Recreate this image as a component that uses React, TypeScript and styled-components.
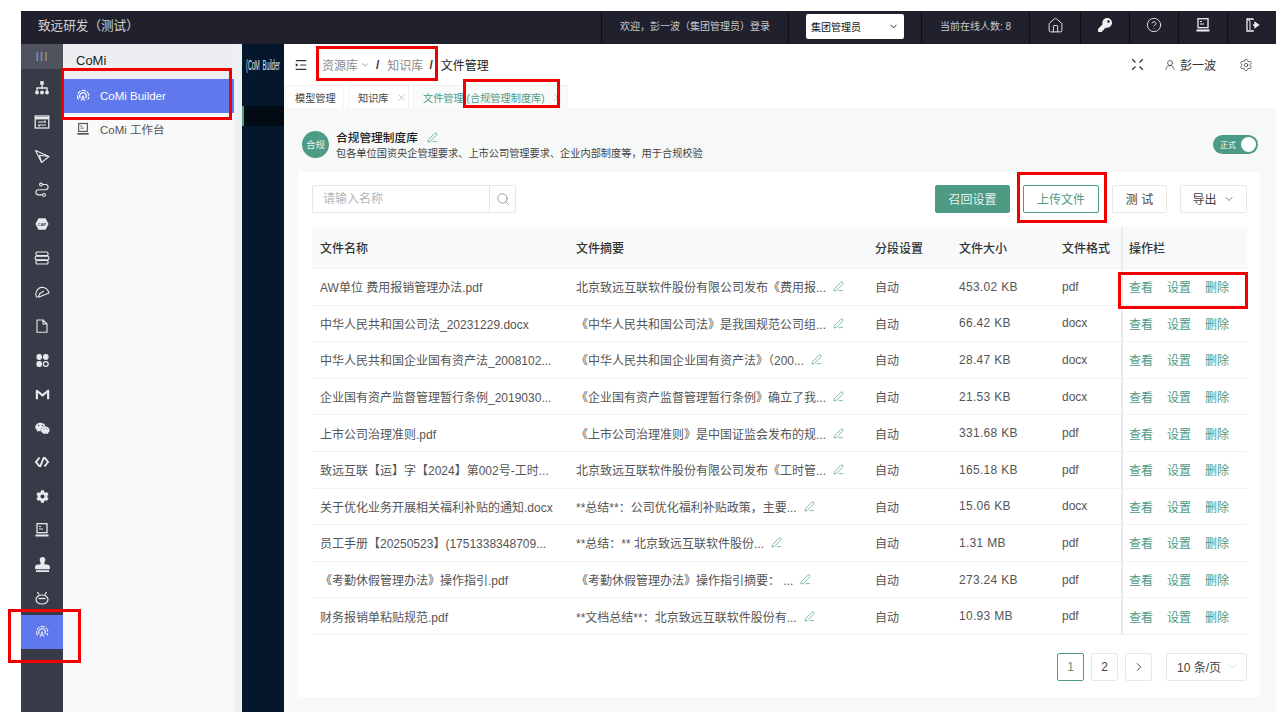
import React from "react";
import styled, { createGlobalStyle } from "styled-components";
import {
  ChevronDown,
  ChevronRight,
  CircleHelp,
  House,
  PenLine,
  Search,
  Settings,
  UserRound,
  X,
} from "lucide-react";
import { FaCog, FaKey, FaStamp, FaWeixin } from "react-icons/fa";

const GREEN = "#4d9a85";

const GlobalStyle = createGlobalStyle`
  html, body {
    margin: 0;
    background: #fff;
    font-family: "Liberation Sans", "Noto Sans CJK SC", sans-serif;
  }
  * { box-sizing: border-box; }
`;

const Page = styled.div`
  position: relative;
  height: 712px;
  padding: 11px 0 0 21px;
  overflow: hidden;
`;

const TopBar = styled.header`
  display: flex;
  height: 33px;
  background: #20212c;
  color: #c9cacd;
  font-size: 10px;
`;

const Brand = styled.div`
  width: 580px;
  padding-left: 17px;
  font-size: 12.6px;
  line-height: 30px;
  color: #d2d3d6;
`;

const BarCell = styled.div<{ $width: number }>`
  display: flex;
  align-items: center;
  justify-content: center;
  width: ${(p) => p.$width}px;
  padding-bottom: 5px;
  border-left: 1px solid #0e0f16;
  color: ${(p) => (p.$width < 60 ? "#f0f0f2" : "inherit")};
`;

const RoleSelect = styled.div`
  display: flex;
  align-items: center;
  justify-content: space-between;
  width: 98px;
  height: 25px;
  margin-top: 2px;
  padding: 0 5px;
  background: #fff;
  border-radius: 2px;
  color: #111;
`;

const Body = styled.div`
  display: flex;
  height: 668px;
`;

const Rail = styled.nav`
  width: 42px;
  background: #383b47;
  color: #e8e9ec;
`;

const RailTop = styled.div`
  display: flex;
  align-items: center;
  justify-content: center;
  height: 25px;
  margin-bottom: 2px;
  background: #50535e;
  color: #9a9ca4;
  font-size: 12px;
  letter-spacing: 1px;
`;

const RailItem = styled.div<{ $active?: boolean }>`
  display: flex;
  align-items: center;
  justify-content: center;
  height: 34px;
  background: ${(p) => (p.$active ? "#5f78ec" : "transparent")};
`;

const SidePanel = styled.aside`
  width: 179px;
  padding-right: 8px;
  background: #eef0f2;
`;

const SideInner = styled.div`
  height: 100%;
  background: #f7f9fb;
`;

const SideTitle = styled.div`
  height: 35px;
  padding: 8px 0 0 13px;
  background: #eceef1;
  color: #222;
  font-size: 13px;
  line-height: 18px;
`;

const SideItem = styled.div<{ $active?: boolean }>`
  display: flex;
  align-items: center;
  gap: 10px;
  height: 33.5px;
  padding-left: 13px;
  background: ${(p) => (p.$active ? "#5f78ec" : "transparent")};
  color: ${(p) => (p.$active ? "#fff" : "#555")};
  font-size: 11.5px;
`;

const DarkNav = styled.div`
  width: 42px;
  background: #04172b;
  color: #e6e8ea;
`;

const NavLogo = styled.div`
  display: flex;
  justify-content: center;
  gap: 5px;
  height: 42px;
  padding-top: 12px;
  font-size: 10px;
  line-height: 18px;
  white-space: nowrap;
  transform: scale(0.56, 1.5);
  transform-origin: 50% 21px;
`;

const NavActive = styled.div`
  height: 20px;
  margin-top: 20px;
  background: #020a14;
  border-left: 2px solid ${GREEN};
`;

const Main = styled.main`
  display: flex;
  flex-direction: column;
  flex: 1;
  min-width: 0;
  background: #f7f8f8;
`;

const CrumbBar = styled.div`
  display: flex;
  align-items: center;
  height: 36px;
  padding: 5px 23px 0 10px;
  background: #fff;
  color: #8b8b8b;
  font-size: 12px;
`;

const MenuGlyph = styled.span`
  display: flex;
  margin-right: 14px;
  color: #333;
`;

const Crumb = styled.span<{ $current?: boolean }>`
  color: ${(p) => (p.$current ? "#222" : "#8b8b8b")};
`;

const CrumbCaret = styled(ChevronDown)`
  margin-left: 2px;
`;

const Slash = styled.span`
  margin: 0 8px 0 6px;
  color: #333;
  font-weight: 700;
`;

const CrumbRight = styled.div`
  display: flex;
  align-items: center;
  margin-left: auto;
  color: #333;
`;

const CrumbUser = styled.span`
  display: flex;
  align-items: center;
  gap: 4px;
  margin: 0 23px 0 20px;
`;

const TabBar = styled.div`
  display: flex;
  gap: 4px;
  height: 28px;
  padding: 5px 0 0 1px;
  background: #fff;
`;

const Tab = styled.div<{ $active?: boolean; $width: number }>`
  display: flex;
  flex: none;
  align-items: center;
  gap: 7px;
  width: ${(p) => p.$width}px;
  padding-left: 9px;
  background: ${(p) => (p.$active ? "#f9fafa" : "#fff")};
  border: 1px solid #f2f2f2;
  border-bottom: 0;
  color: ${(p) => (p.$active ? GREEN : "#444")};
  font-size: 10.2px;
  white-space: nowrap;
`;

const TabClose = styled(X)`
  flex: none;
  color: #999;
`;

const LibraryHead = styled.section`
  display: flex;
  align-items: center;
  gap: 7px;
  height: 64px;
  padding: 8px 18px 0;
`;

const LibraryBadge = styled.div`
  display: flex;
  align-items: center;
  justify-content: center;
  width: 27px;
  height: 27px;
  border-radius: 50%;
  background: ${GREEN};
  color: #e8f2ef;
  font-size: 9.5px;
`;

const LibraryText = styled.div`
  flex: 1;
  padding-top: 2px;
`;

const LibraryTitle = styled.div`
  display: flex;
  align-items: center;
  gap: 9px;
  color: #222;
  font-size: 11.7px;
  font-weight: 500;
  line-height: 16px;
`;

const LibraryDesc = styled.div`
  margin-top: 1px;
  color: #444;
  font-size: 10.2px;
  line-height: 14px;
`;

const Pencil = styled(PenLine)`
  flex: none;
  color: ${GREEN};
`;

const Toggle = styled.div`
  display: flex;
  align-items: center;
  justify-content: space-between;
  width: 45px;
  height: 19px;
  padding: 0 2px 0 7px;
  border-radius: 10px;
  background: ${GREEN};
  color: #fff;
  font-size: 8px;
`;

const ToggleKnob = styled.span`
  width: 15px;
  height: 15px;
  border-radius: 50%;
  background: #fff;
`;

const Card = styled.section`
  width: 962px;
  height: 525px;
  margin-left: 14px;
  padding: 13px 13px 0 14px;
  background: #fff;
`;

const Toolbar = styled.div`
  display: flex;
  align-items: center;
  height: 28px;
  margin-bottom: 14px;
`;

const SearchBox = styled.div`
  display: flex;
  width: 204px;
  height: 28px;
  margin-right: auto;
  border: 1px solid #e6e7e8;
  border-radius: 2px;
  color: #b5b5b5;
  font-size: 12px;
`;

const SearchText = styled.div`
  flex: 1;
  padding-left: 10px;
  line-height: 26px;
`;

const SearchIcon = styled.div`
  display: flex;
  align-items: center;
  justify-content: center;
  width: 26px;
  border-left: 1px solid #e6e7e8;
  color: #777;
`;

const Button = styled.div<{ $variant?: "primary" | "outline"; $width: number }>`
  display: flex;
  align-items: center;
  justify-content: center;
  gap: 6px;
  width: ${(p) => p.$width}px;
  height: 28px;
  margin-left: 13px;
  padding-bottom: 1px;
  border: 1px solid ${(p) => (p.$variant ? GREEN : "#e8e8e8")};
  border-radius: 2px;
  background: ${(p) => (p.$variant === "primary" ? GREEN : "#fff")};
  color: ${(p) =>
    p.$variant === "primary" ? "#e6f1ee" : p.$variant === "outline" ? GREEN : "#444"};
  font-size: 12px;
`;

const Row = styled.div<{ $head?: boolean }>`
  display: grid;
  grid-template-columns: 256px 299px 84px 103px 67px 126px;
  align-items: center;
  height: ${(p) => (p.$head ? "42px" : "36.6px")};
  background: ${(p) => (p.$head ? "#f8f9fa" : "#fff")};
  border-bottom: 1px solid #f2f3f4;
  color: ${(p) => (p.$head ? "#333" : "#555")};
  font-size: 12px;
  font-weight: ${(p) => (p.$head ? 500 : 400)};
`;

const Cell = styled.div`
  padding-left: 8px;
  white-space: nowrap;
`;

const SummaryCell = styled(Cell)`
  display: flex;
  align-items: center;
  gap: 7px;
`;

const SizeCell = styled(Cell)`
  letter-spacing: 0.3px;
`;

const OpsCell = styled(Cell)<{ $head?: boolean }>`
  display: flex;
  align-items: center;
  gap: 14px;
  height: 100%;
  padding-left: 6px;
  border-left: 2px solid #e9eaeb;
  color: ${(p) => (p.$head ? "#333" : GREEN)};
`;

const Pager = styled.div`
  display: flex;
  justify-content: flex-end;
  gap: 7px;
  margin-top: 18px;
`;

const PageBtn = styled.div<{ $active?: boolean }>`
  display: flex;
  align-items: center;
  justify-content: center;
  width: 27px;
  height: 28px;
  border: 1px solid ${(p) => (p.$active ? GREEN : "#e8e8e8")};
  border-radius: 2px;
  color: ${(p) => (p.$active ? GREEN : "#444")};
  font-size: 12px;
`;

const PageSize = styled(PageBtn)`
  justify-content: space-between;
  width: 81px;
  margin-left: 7px;
  padding: 0 7px 0 10px;
  color: #444;
`;

const SizeCaret = styled(ChevronDown)`
  color: #bbb;
`;

// red review marks drawn over the screenshot
const Mark = styled.div<{ $x: number; $y: number; $w: number; $h: number }>`
  position: absolute;
  left: ${(p) => p.$x}px;
  top: ${(p) => p.$y}px;
  width: ${(p) => p.$w}px;
  height: ${(p) => p.$h}px;
  border: 3px solid #f00000;
  pointer-events: none;
`;

const Svg = ({ size = 16, children }: { size?: number; children: React.ReactNode }) => (
  <svg width={size} height={size} viewBox="0 0 16 16" fill="none" stroke="currentColor" strokeWidth="1.3">
    {children}
  </svg>
);

const TerminalIcon = ({ size = 16 }: { size?: number }) => (
  <Svg size={size}>
    <rect x="3" y="1.7" width="10" height="9" />
    <path d="M5 4.5h2M5 7h4" strokeWidth="1" />
    <path d="M1.5 13.5h13" strokeWidth="2" />
  </Svg>
);

const SignalIcon = ({ size = 16 }: { size?: number }) => (
  <Svg size={size}>
    <path d="M3 12A6.5 6.5 0 1 1 13.4 12" strokeDasharray="5 1.2" />
    <path d="M5 10.5A3.8 3.8 0 1 1 11 10.5" />
    <path d="M6 13.5l2-6 2 6M6.8 11.5h2.4" strokeWidth="1.1" />
  </Svg>
);

const railIcons: React.ReactNode[] = [
  <Svg key="org">
    <rect x="6.2" y="1.2" width="3.6" height="3.6" fill="currentColor" stroke="none" />
    <path d="M8 5v4M3 11V8h10v3" />
    <circle cx="3" cy="12.5" r="1.9" fill="currentColor" stroke="none" />
    <circle cx="8" cy="12.5" r="1.9" fill="currentColor" stroke="none" />
    <circle cx="13" cy="12.5" r="1.9" fill="currentColor" stroke="none" />
  </Svg>,
  <Svg key="window">
    <rect x="1.2" y="2" width="13.6" height="12" />
    <path d="M1.2 4.2h13.6" strokeWidth="2.4" />
    <path d="M4 8h8l-2-1.5M12 11H4l2 1.5" strokeWidth="1" />
  </Svg>,
  <Svg key="send">
    <path d="M1.5 2.5L15 8.5 7.5 14.5zM7.5 14.5L5.5 7.2 15 8.5" strokeLinejoin="round" strokeWidth="1.1" />
  </Svg>,
  <Svg key="route">
    <path d="M8.5 2.5h3a2.4 2.4 0 0 1 0 5.2H4.5a2.4 2.4 0 0 0 0 5.2h4" strokeWidth="1.1" />
    <circle cx="7" cy="2.5" r="1.4" strokeWidth="1.1" />
    <circle cx="10" cy="12.9" r="1.4" strokeWidth="1.1" />
  </Svg>,
  <svg key="cap" width="14" height="14" viewBox="0 0 16 16">
    <path d="M4 1.5h8l3.5 6.5-3.5 6.5H4L.5 8z" fill="currentColor" />
    <text x="8" y="9.8" textAnchor="middle" fontSize="4.6" fontWeight="700" fill="#383b47">
      CAP
    </text>
  </svg>,
  <Svg key="stack">
    <rect x="2" y="2" width="12" height="3.6" rx="1" strokeWidth="1.1" />
    <rect x="1.2" y="6.2" width="13.6" height="3.6" rx="1" strokeWidth="1.1" />
    <rect x="2" y="10.4" width="12" height="3.6" rx="1" strokeWidth="1.1" />
  </Svg>,
  <Svg key="gauge">
    <path
      d="M2.5 13A6.8 6.8 0 0 1 8 3.3 8 8 0 0 1 15 9L5 13zM5 12.5A3.8 3.8 0 0 1 8 8.5L9.5 7"
      strokeLinejoin="round"
      strokeWidth="1.1"
    />
  </Svg>,
  <Svg key="file">
    <path d="M3 2h6l4 4v8.2H3zM9 2v4h4" strokeLinejoin="round" strokeWidth="1.1" />
  </Svg>,
  <svg key="clover" width="15" height="15" viewBox="0 0 16 16">
    <rect x="1.5" y="1" width="6" height="6.5" rx="2.6" fill="currentColor" />
    <rect x="8.5" y="1" width="6" height="6.5" rx="2.6" fill="currentColor" />
    <rect x="1.5" y="8.5" width="6" height="6.5" rx="2.6" fill="currentColor" />
    <circle cx="11.5" cy="11.7" r="2.6" fill="none" stroke="currentColor" strokeWidth="1.3" />
  </svg>,
  <Svg key="m" size={15}>
    <path d="M2 13V4l6 5 6-5v9" strokeWidth="2.3" strokeLinejoin="round" />
  </Svg>,
  <FaWeixin key="wechat" size={15} />,
  <Svg key="code">
    <path d="M5.5 3.5L2 8l3.5 4.5M10.5 3.5L14 8l-3.5 4.5M10 3L6 13" strokeWidth="2" />
  </Svg>,
  <FaCog key="cog" size={13} />,
  <TerminalIcon key="terminal" />,
  <FaStamp key="stamp" size={15} />,
  <Svg key="robot">
    <ellipse cx="8" cy="9.5" rx="6" ry="4.5" strokeWidth="1.2" />
    <path d="M4.5 8.5h7" />
    <path d="M5 4.5L3.5 2M11 4.5L12.5 2" />
  </Svg>,
];

type FileRow = { name: string; summary: string; size: string; format: string };

const files: FileRow[] = [
  { name: "AW单位 费用报销管理办法.pdf", summary: "北京致远互联软件股份有限公司发布《费用报...", size: "453.02 KB", format: "pdf" },
  { name: "中华人民共和国公司法_20231229.docx", summary: "《中华人民共和国公司法》是我国规范公司组...", size: "66.42 KB", format: "docx" },
  { name: "中华人民共和国企业国有资产法_2008102...", summary: "《中华人民共和国企业国有资产法》（200...", size: "28.47 KB", format: "docx" },
  { name: "企业国有资产监督管理暂行条例_2019030...", summary: "《企业国有资产监督管理暂行条例》确立了我...", size: "21.53 KB", format: "docx" },
  { name: "上市公司治理准则.pdf", summary: "《上市公司治理准则》是中国证监会发布的规...", size: "331.68 KB", format: "pdf" },
  { name: "致远互联【运】字【2024】第002号-工时...", summary: "北京致远互联软件股份有限公司发布《工时管...", size: "165.18 KB", format: "pdf" },
  { name: "关于优化业务开展相关福利补贴的通知.docx", summary: "**总结**：公司优化福利补贴政策，主要...", size: "15.06 KB", format: "docx" },
  { name: "员工手册【20250523】(1751338348709...", summary: "**总结：** 北京致远互联软件股份...", size: "1.31 MB", format: "pdf" },
  { name: "《考勤休假管理办法》操作指引.pdf", summary: "《考勤休假管理办法》操作指引摘要： ...", size: "273.24 KB", format: "pdf" },
  { name: "财务报销单粘贴规范.pdf", summary: "**文档总结**：北京致远互联软件股份有...", size: "10.93 MB", format: "pdf" },
];

export default function App() {
  return (
    <>
      <GlobalStyle />
      <Page>
        <TopBar>
          <Brand>致远研发（测试）</Brand>
          <BarCell $width={187}>欢迎，彭一波（集团管理员）登录</BarCell>
          <BarCell $width={133}>
            <RoleSelect>
              集团管理员
              <ChevronDown size={11} />
            </RoleSelect>
          </BarCell>
          <BarCell $width={108}>当前在线人数: 8</BarCell>
          <BarCell $width={51}>
            <House size={17} strokeWidth={1.3} />
          </BarCell>
          <BarCell $width={49}>
            <FaKey size={14} />
          </BarCell>
          <BarCell $width={49}>
            <CircleHelp size={16} strokeWidth={1.3} />
          </BarCell>
          <BarCell $width={49}>
            <TerminalIcon />
          </BarCell>
          <BarCell $width={49}>
            <Svg>
              <path d="M9 3V2H3v12h6v-1" />
              <path d="M3 2l3 2v9" strokeWidth="1" />
              <path d="M9 8h3M11 5.5L14.5 8 11 10.5z" fill="currentColor" />
            </Svg>
          </BarCell>
        </TopBar>
        <Body>
          <Rail>
            <RailTop>III</RailTop>
            {railIcons.map((icon, i) => (
              <RailItem key={i}>{icon}</RailItem>
            ))}
            <RailItem $active>
              <SignalIcon size={14} />
            </RailItem>
          </Rail>
          <SidePanel>
            <SideInner>
              <SideTitle>CoMi</SideTitle>
              <SideItem $active>
                <SignalIcon size={14} />
                CoMi Builder
              </SideItem>
              <SideItem>
                <TerminalIcon size={14} />
                CoMi 工作台
              </SideItem>
            </SideInner>
          </SidePanel>
          <DarkNav>
            <NavLogo>
              <span>(CoM</span>
              <span>Builder</span>
            </NavLogo>
            <NavActive />
          </DarkNav>
          <Main>
            <CrumbBar>
              <MenuGlyph>
                <Svg size={14}>
                  <path d="M2 3h12M7 8h7M2 13h12" />
                  <path d="M2 6l3 2-3 2z" fill="currentColor" stroke="none" />
                </Svg>
              </MenuGlyph>
              <Crumb>资源库</Crumb>
              <CrumbCaret size={10} />
              <Slash>/</Slash>
              <Crumb>知识库</Crumb>
              <Slash>/</Slash>
              <Crumb $current>文件管理</Crumb>
              <CrumbRight>
                <Svg size={13}>
                  <path d="M1.5 1.5l4 4M14.5 1.5l-4 4M1.5 14.5l4-4M14.5 14.5l-4-4" strokeWidth="1.6" />
                </Svg>
                <CrumbUser>
                  <UserRound size={12} strokeWidth={1.4} />
                  彭一波
                </CrumbUser>
                <Settings size={14} strokeWidth={1.2} />
              </CrumbRight>
            </CrumbBar>
            <TabBar>
              <Tab $width={59}>模型管理</Tab>
              <Tab $width={61}>
                知识库
                <TabClose size={11} strokeWidth={1.3} />
              </Tab>
              <Tab $active $width={155}>
                文件管理 (合规管理制度库)
                <TabClose size={11} strokeWidth={1.3} />
              </Tab>
            </TabBar>
            <LibraryHead>
              <LibraryBadge>合规</LibraryBadge>
              <LibraryText>
                <LibraryTitle>
                  合规管理制度库
                  <Pencil size={11} strokeWidth={1.5} />
                </LibraryTitle>
                <LibraryDesc>包各单位国资央企管理要求、上市公司管理要求、企业内部制度等，用于合规校验</LibraryDesc>
              </LibraryText>
              <Toggle>
                正式
                <ToggleKnob />
              </Toggle>
            </LibraryHead>
            <Card>
              <Toolbar>
                <SearchBox>
                  <SearchText>请输入名称</SearchText>
                  <SearchIcon>
                    <Search size={14} strokeWidth={1.2} />
                  </SearchIcon>
                </SearchBox>
                <Button $variant="primary" $width={75}>
                  召回设置
                </Button>
                <Button $variant="outline" $width={76}>
                  上传文件
                </Button>
                <Button $width={55}>测 试</Button>
                <Button $width={67}>
                  导出
                  <ChevronDown size={12} strokeWidth={1.4} />
                </Button>
              </Toolbar>
              <Row $head>
                <Cell>文件名称</Cell>
                <Cell>文件摘要</Cell>
                <Cell>分段设置</Cell>
                <Cell>文件大小</Cell>
                <Cell>文件格式</Cell>
                <OpsCell $head>操作栏</OpsCell>
              </Row>
              {files.map((file) => (
                <Row key={file.name}>
                  <Cell>{file.name}</Cell>
                  <SummaryCell>
                    {file.summary}
                    <Pencil size={11} strokeWidth={1.5} />
                  </SummaryCell>
                  <Cell>自动</Cell>
                  <SizeCell>{file.size}</SizeCell>
                  <Cell>{file.format}</Cell>
                  <OpsCell>
                    <span>查看</span>
                    <span>设置</span>
                    <span>删除</span>
                  </OpsCell>
                </Row>
              ))}
              <Pager>
                <PageBtn $active>1</PageBtn>
                <PageBtn>2</PageBtn>
                <PageBtn>
                  <ChevronRight size={14} strokeWidth={1.6} />
                </PageBtn>
                <PageSize>
                  10 条/页
                  <SizeCaret size={13} strokeWidth={1} />
                </PageSize>
              </Pager>
            </Card>
          </Main>
        </Body>
        <Mark $x={61} $y={68} $w={171} $h={52} />
        <Mark $x={8} $y={609} $w={73} $h={54} />
        <Mark $x={316} $y={46} $w={122} $h={35} />
        <Mark $x={463} $y={79} $w={97} $h={29} />
        <Mark $x={1017} $y={172} $w={90} $h={51} />
        <Mark $x={1118} $y={272} $w={130} $h={37} />
      </Page>
    </>
  );
}
